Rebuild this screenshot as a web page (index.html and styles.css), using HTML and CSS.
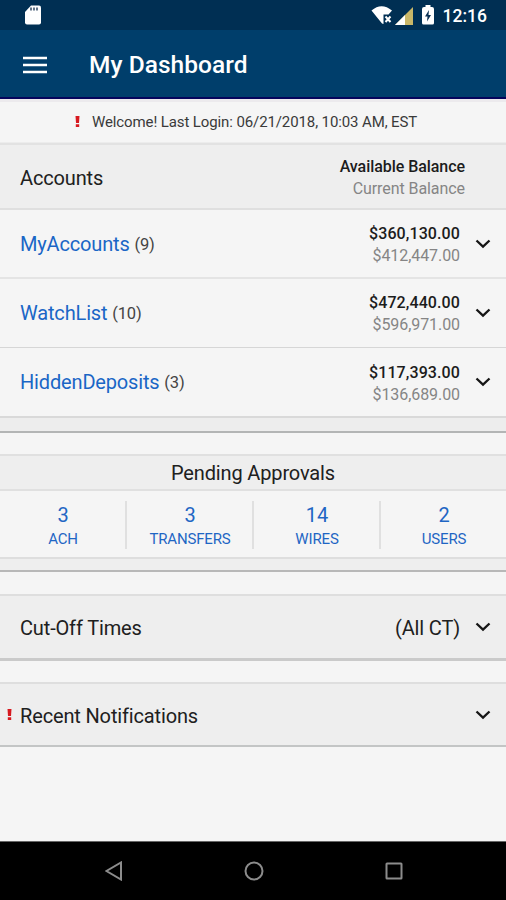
FILE: index.html
```html
<!DOCTYPE html>
<html lang="en">
<head>
<meta charset="utf-8">
<title>My Dashboard</title>
<link rel="stylesheet" href="styles.css">
</head>
<body>
<div class="screen">
  <div class="status-bar">
    <svg class="sd-card" width="16" height="20" viewBox="0 0 16 20"><path d="M6 0.5h8q2 0 2 2v15q0 2-2 2H2q-2 0-2-2V7z" fill="#fff"/><path d="M6 2.500v3M9 2.500v3M12 2.500v3" stroke="#52677d" stroke-width="1.800"/></svg>
    <div class="status-icons">
      <svg class="wifi" width="22" height="19" viewBox="0 0 22 19"><path d="M0.500 4.500Q10.500-4 21 4.500L17.500 8.500H12.500V18L11 17.500z" fill="#fff"/><path d="M14.500 10.500l5 5.500M19.500 10.500l-5 5.500" stroke="#fff" stroke-width="2"/></svg>
      <svg class="signal" width="19" height="18" viewBox="0 0 19 18"><path d="M18 0v18H0z" fill="#c9b768"/><path d="M10 8v10H0z" fill="#fff"/></svg>
      <svg class="battery" width="12" height="20" viewBox="0 0 12 20"><path d="M3.500 0h5v2H10q2 0 2 2v14q0 1.500-1.500 1.500h-9Q0 19.500 0 18V4q0-2 2-2h1.500z" fill="#fff"/><path d="M7 5L3 11.500h2.500L5 16.500l4-6.500H6.500z" fill="#0a3154"/></svg>
      <span class="clock">12:16</span>
    </div>
  </div>
  <header class="app-bar">
    <svg class="menu" width="24" height="18" viewBox="0 0 24 18"><path d="M0 2h24M0 9h24M0 16h24" stroke="#fff" stroke-width="2.700"/></svg>
    <h1 class="title">My Dashboard</h1>
  </header>
  <div class="welcome">
    <svg class="alert" width="5" height="11" viewBox="0 0 5 11"><path d="M0.500 0h4L4 7H1zM0.800 8.200h3.400V11H0.800z" fill="#d7191f"/></svg>
    <span class="welcome-text">Welcome! Last Login: 06/21/2018, 10:03 AM, EST</span>
  </div>
  <section class="accounts">
    <div class="accounts-head">
      <h2 class="label accounts-label">Accounts</h2>
      <div class="amounts"><b class="available">Available Balance</b><span class="current">Current Balance</span></div>
    </div>
    <div class="row">
      <span class="name"><a class="link">MyAccounts</a> <span class="count">(9)</span></span>
      <div class="amounts"><b class="available money">$360,130.00</b><span class="current">$412,447.00</span></div>
      <svg class="chevron" width="16" height="10" viewBox="0 0 16 10"><path d="M1.500 1.500L8 7.700l6.500-6.200" fill="none" stroke="#161616" stroke-width="2.300"/></svg>
    </div>
    <div class="row row-middle">
      <span class="name"><a class="link">WatchList</a> <span class="count">(10)</span></span>
      <div class="amounts"><b class="available money">$472,440.00</b><span class="current">$596,971.00</span></div>
      <svg class="chevron" width="16" height="10" viewBox="0 0 16 10"><path d="M1.500 1.500L8 7.700l6.500-6.200" fill="none" stroke="#161616" stroke-width="2.300"/></svg>
    </div>
    <div class="row row-last">
      <span class="name"><a class="link">HiddenDeposits</a> <span class="count">(3)</span></span>
      <div class="amounts"><b class="available money">$117,393.00</b><span class="current">$136,689.00</span></div>
      <svg class="chevron" width="16" height="10" viewBox="0 0 16 10"><path d="M1.500 1.500L8 7.700l6.500-6.200" fill="none" stroke="#161616" stroke-width="2.300"/></svg>
    </div>
    <div class="card-foot"></div>
  </section>
  <section class="approvals">
    <h2 class="approvals-head label">Pending Approvals</h2>
    <div class="stats">
      <div class="stat"><span class="number">3</span><span class="kind">ACH</span></div>
      <div class="stat"><span class="number">3</span><span class="kind">TRANSFERS</span></div>
      <div class="stat"><span class="number">14</span><span class="kind">WIRES</span></div>
      <div class="stat"><span class="number">2</span><span class="kind">USERS</span></div>
    </div>
    <div class="approvals-foot"></div>
  </section>
  <section class="panel cutoff">
    <h2 class="label cutoff-label">Cut-Off Times</h2>
    <span class="label zone">(All CT)</span>
    <svg class="chevron" width="16" height="10" viewBox="0 0 16 10"><path d="M1.500 1.500L8 7.700l6.500-6.200" fill="none" stroke="#161616" stroke-width="2.300"/></svg>
  </section>
  <section class="panel recent">
    <svg class="alert" width="5" height="11" viewBox="0 0 5 11"><path d="M0.500 0h4L4 7H1zM0.800 8.200h3.400V11H0.800z" fill="#d7191f"/></svg>
    <h2 class="label recent-label">Recent Notifications</h2>
    <svg class="chevron" width="16" height="10" viewBox="0 0 16 10"><path d="M1.500 1.500L8 7.700l6.500-6.200" fill="none" stroke="#161616" stroke-width="2.300"/></svg>
  </section>
  <nav class="nav-bar">
    <svg width="18" height="20" viewBox="0 0 18 20"><path d="M16 1.500v17L1.500 10z" fill="none" stroke="#8c8c8c" stroke-width="2"/></svg>
    <svg width="20" height="20" viewBox="0 0 20 20"><circle cx="10" cy="10" r="8.500" fill="none" stroke="#8c8c8c" stroke-width="2"/></svg>
    <svg width="18" height="18" viewBox="0 0 18 18"><rect x="1.500" y="1.500" width="15" height="15" rx="0.500" fill="none" stroke="#8c8c8c" stroke-width="2"/></svg>
  </nav>
</div>
</body>
</html>
```
FILE: styles.css
```css
* { box-sizing: border-box; }
body { margin: 0; font-family: Roboto, "Liberation Sans", sans-serif; color: #202020; }
h1, h2 { margin: 0; }
svg { display: block; flex: none; }
.screen { width: 506px; height: 900px; display: flex; flex-direction: column; background: #f5f5f5; overflow: hidden; white-space: nowrap; }
.status-bar { height: 30px; flex: none; background: #002f53; display: flex; justify-content: space-between; padding: 0 19px 0 25px; }
.sd-card { margin-top: 5px; }
.status-icons { display: flex; align-items: flex-start; }
.wifi { margin-top: 6px; }
.signal { margin: 7px 0 0 2px; }
.battery { margin: 5px 0 0 8px; }
.clock { margin-left: 9px; font-size: 17.500px; font-weight: 500; line-height: 32px; color: #fff; }
.app-bar { height: 69px; flex: none; background: #003e6b; border-bottom: 2px solid #05045c; display: flex; align-items: center; padding: 2px 0 0 23px; }
.title { margin-left: 42px; padding-top: 1px; font-size: 24.500px; font-weight: 500; line-height: 30px; letter-spacing: 0.050px; color: #fff; }
.welcome { height: 44px; flex: none; border-top: 3px solid #eceaed; border-bottom: 1px solid #ececec; display: flex; align-items: center; padding-left: 75px; }
.welcome .alert { margin-top: -1px; }
.welcome-text { margin-left: 12px; font-size: 15px; letter-spacing: -0.110px; color: #3a3a3a; }
.accounts { flex: none; display: flex; flex-direction: column; }
.accounts-head { height: 67px; display: flex; align-items: center; justify-content: space-between; padding: 2px 41px 0 20px; background: #eee; border-top: 2px solid #e2e2e2; border-bottom: 2px solid #dfdfdf; }
.label { font-size: 20px; font-weight: 400; line-height: 24px; letter-spacing: -0.150px; }
.amounts { display: flex; flex-direction: column; align-items: flex-end; font-size: 16px; line-height: 22px; }
.row .amounts { padding-top: 2px; }
.available { font-weight: 500; letter-spacing: -0.060px; color: #1c1c1c; }
.money { letter-spacing: 0.100px; }
.current { letter-spacing: -0.070px; color: #858585; }
.row { height: 69px; display: flex; align-items: center; padding: 0 15px 0 20px; border-bottom: 2px solid #e4e4e4; }
.row-middle { border-bottom: 1px solid #d6d6d6; }
.row-last { height: 70px; border-bottom: 2px solid #d9d9d9; }
.row-last .amounts { padding-top: 3px; }
.name { flex: 1; padding-top: 2px; font-size: 20px; line-height: 24px; letter-spacing: -0.160px; }
.link { color: #1a66c6; }
.count { font-size: 16.500px; color: #444; position: relative; top: -1px; }
.chevron { margin-left: 15px; }
.card-foot { height: 15px; background: #ededed; border-bottom: 2px solid #b3b5b5; }
.approvals { margin-top: 21px; flex: none; }
.approvals-head { height: 37px; line-height: 35px; text-align: center; background: #eee; border-top: 2px solid #e0e0e0; border-bottom: 2px solid #e0e0e0; }
.stats { height: 66px; display: grid; grid-template-columns: repeat(4, 127px); padding: 10px 0 8px; }
.stat { display: flex; flex-direction: column; align-items: center; color: #1f66c4; border-right: 2px solid #e0e0e0; padding-left: 1px; }
.stat:last-child { border-right: 0; padding: 0 1px 0 0; }
.number { font-size: 20px; line-height: 28px; }
.kind { font-size: 15px; line-height: 18px; letter-spacing: -0.160px; padding-top: 1px; }
.approvals-foot { height: 15px; background: #eee; border-top: 2px solid #dedede; border-bottom: 2px solid #b8b8b8; }
.panel { flex: none; display: flex; align-items: center; padding-right: 15px; background: #eee; border-top: 2px solid #dedede; }
.cutoff { margin-top: 22px; height: 67px; padding-left: 20px; border-bottom: 3px solid #cacaca; }
.cutoff .label { padding-top: 2px; }
.zone { margin-left: auto; }
.recent { margin-top: 21px; height: 65px; padding-left: 7px; border-bottom: 2px solid #c3c5c5; }
.recent-label { margin-left: 8px; padding-top: 2px; flex: 1; }
.nav-bar { margin-top: auto; height: 59px; flex: none; background: #000; border-top: 1px solid #666; display: flex; justify-content: space-between; align-items: center; padding: 0 103px 0 105px; }
```
